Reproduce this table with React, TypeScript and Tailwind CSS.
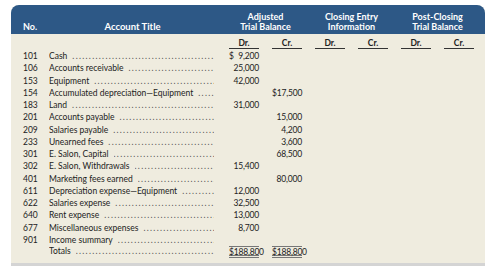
import React from "react";

type Row = { no: string; title: string; dr?: string; cr?: string; drDollar?: boolean; crDollar?: boolean };

const rows: Row[] = [
  { no: "101", title: "Cash", dr: "9,200", drDollar: true },
  { no: "106", title: "Accounts receivable", dr: "25,000" },
  { no: "153", title: "Equipment", dr: "42,000" },
  { no: "154", title: "Accumulated depreciation\u2014Equipment", cr: "17,500", crDollar: true },
  { no: "183", title: "Land", dr: "31,000" },
  { no: "201", title: "Accounts payable", cr: "15,000" },
  { no: "209", title: "Salaries payable", cr: "4,200" },
  { no: "233", title: "Unearned fees", cr: "3,600" },
  { no: "301", title: "E. Salon, Capital", cr: "68,500" },
  { no: "302", title: "E. Salon, Withdrawals", dr: "15,400" },
  { no: "401", title: "Marketing fees earned", cr: "80,000" },
  { no: "611", title: "Depreciation expense\u2014Equipment", dr: "12,000" },
  { no: "622", title: "Salaries expense", dr: "32,500" },
  { no: "640", title: "Rent expense", dr: "13,000" },
  { no: "677", title: "Miscellaneous expenses", dr: "8,700" },
  { no: "901", title: "Income summary" },
];

const DOTS = "..................................................................";

function Money({ v, dollar, top, bottom }: { v?: string; dollar?: boolean; top?: boolean; bottom?: boolean }) {
  return (
    <div className="w-[43px] h-full flex justify-end">
      <div
        className={
          "w-[30px] flex justify-between h-full text-[8.5px] tracking-[-0.2px] " +
          (top ? "border-t border-[#666] " : "") +
          (bottom ? "border-b-[3px] border-double border-[#777] " : "")
        }
      >
        <span>{dollar ? "$" : ""}</span>
        <span>{v ?? ""}</span>
      </div>
    </div>
  );
}

function Title({ text }: { text: string }) {
  return (
    <div className="w-[167px] flex pr-[2px] overflow-hidden whitespace-nowrap">
      <span>{text}</span>
      <span className="flex-1 overflow-hidden tracking-[1.3px] text-[#555] ml-[5px]">{DOTS}</span>
    </div>
  );
}

export default function App() {
  return (
    <div
      className="w-[489px] h-[269px] bg-white pt-[5px] pl-[11px] text-[#222]"
      style={{ fontFamily: "Lato, 'Open Sans', sans-serif" }}
    >
      <div className="w-[474px] rounded-t-[8px] overflow-hidden shadow-[0_3px_0_#d4d4d4] bg-[#efecdf]">
        <div className="h-[29px] bg-[#2d5886] text-white font-bold text-[9px] leading-[10px] flex items-end pb-[2px]">
          <div className="w-[38px] pl-[12px]">No.</div>
          <div className="w-[167px] text-center text-[9.5px]">Account Title</div>
          <div className="w-[86px] pl-[13px] text-center">
            Adjusted
            <br />
            Trial Balance
          </div>
          <div className="w-[86px] pl-[13px] text-center">
            Closing Entry
            <br />
            Information
          </div>
          <div className="w-[86px] pl-[13px] text-center">
            Post-Closing
            <br />
            Trial Balance
          </div>
        </div>
        <div className="text-[8.5px] pb-[5px]">
          <div className="h-[16px] flex items-end pb-[1px] font-bold text-[8.5px]">
            <div className="w-[205px]" />
            {["Dr.", "Cr.", "Dr.", "Cr.", "Dr.", "Cr."].map((t, i) => (
              <div key={i} className="w-[43px] flex justify-end">
                <div className="w-[30px] text-center border-b border-[#333] leading-[10px]">{t}</div>
              </div>
            ))}
          </div>
          {rows.map((r) => (
            <div key={r.no} className="h-[12.25px] leading-[12.25px] flex">
              <div className="w-[38px] pl-[12px] text-[8.5px]">{r.no}</div>
              <Title text={r.title} />
              <Money v={r.dr} dollar={r.drDollar} />
              <Money v={r.cr} dollar={r.crDollar} />
            </div>
          ))}
          <div className="h-[12.25px] leading-[11px] flex">
            <div className="w-[38px] pl-[12px]" />
            <Title text="Totals" />
            <Money v="$188,800" top bottom />
            <Money v="$188,800" top bottom />
          </div>
        </div>
      </div>
    </div>
  );
}
